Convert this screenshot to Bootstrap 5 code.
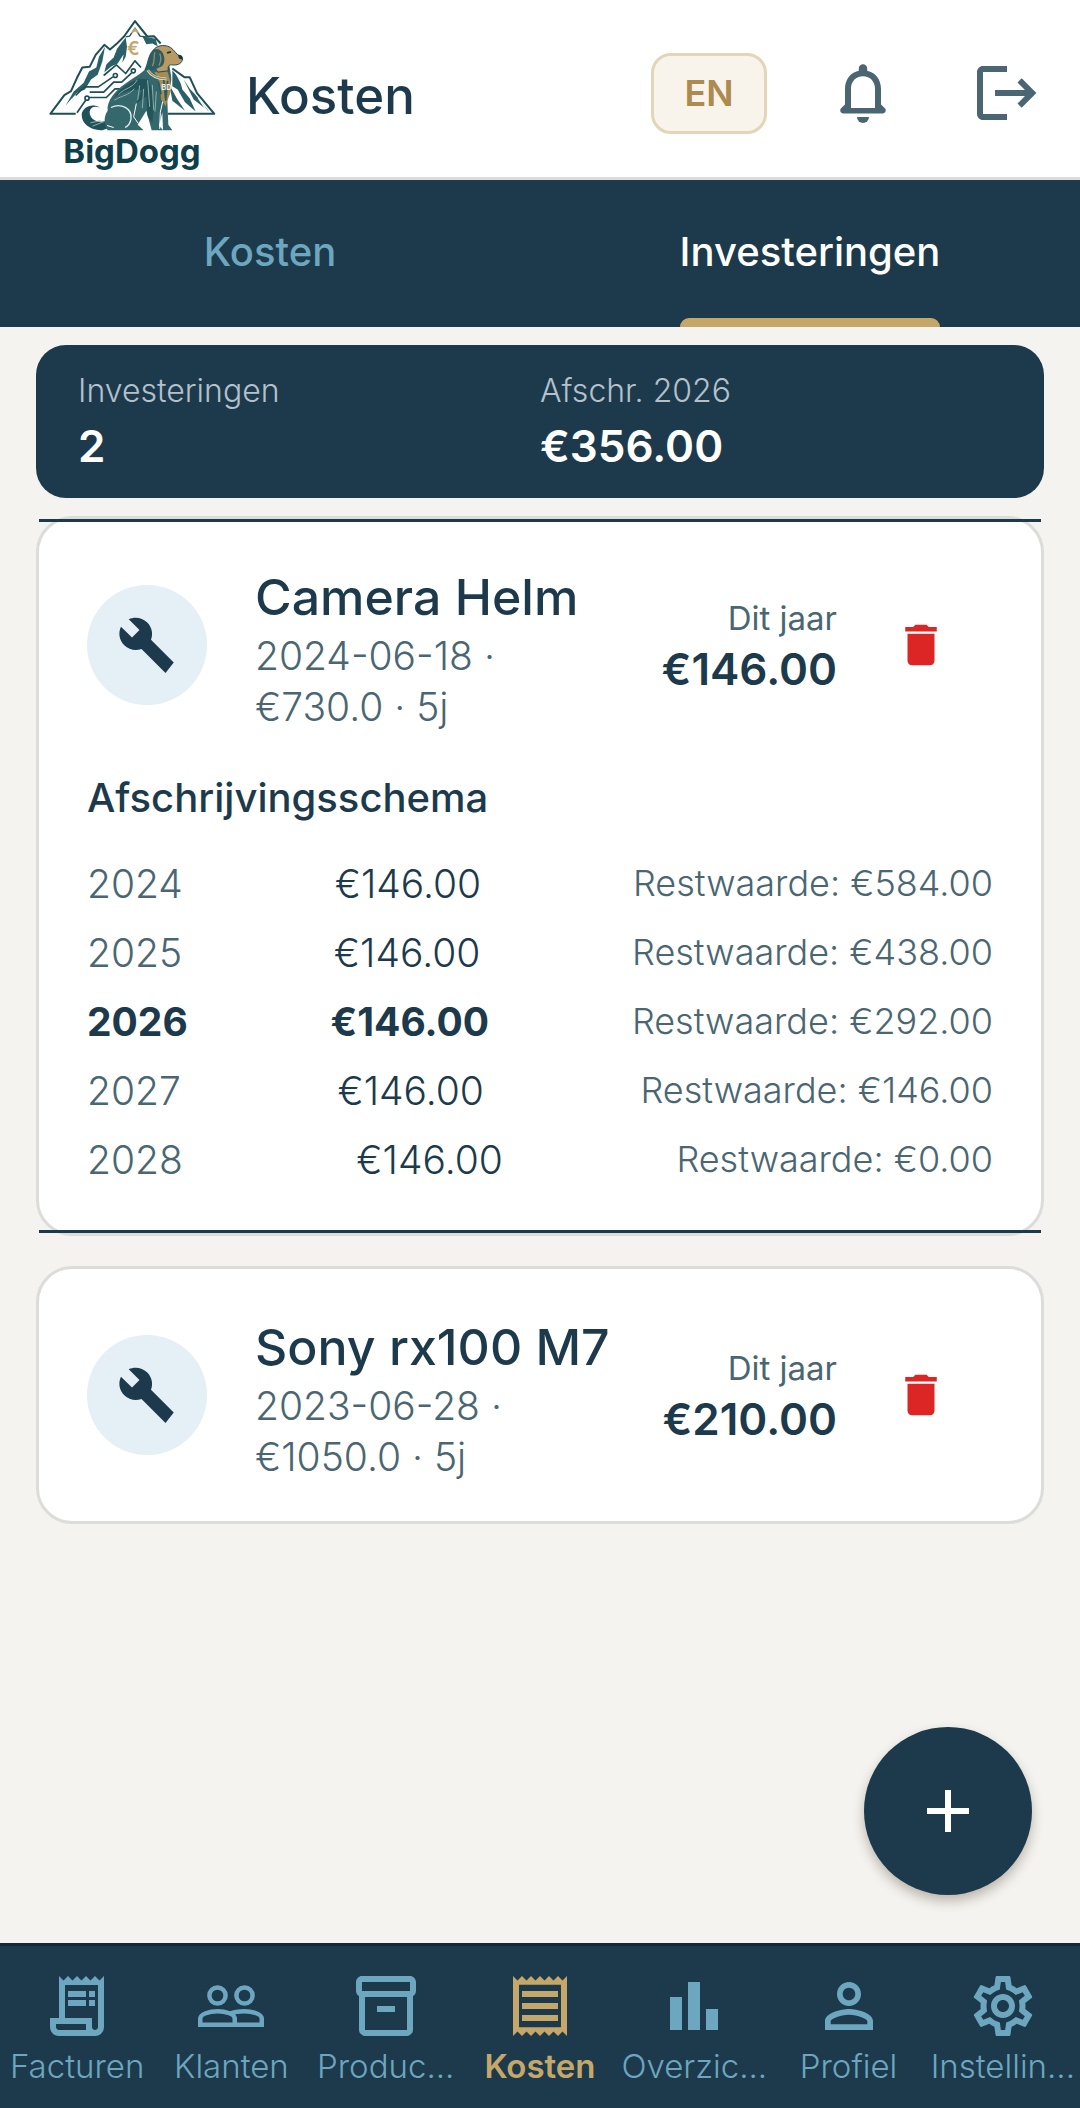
<!DOCTYPE html>
<html lang="nl">
<head>
  <meta charset="UTF-8">
  <meta name="viewport" content="width=device-width, initial-scale=1.0">
  <title>BigDogg - Kosten</title>
  <link href="https://cdn.jsdelivr.net/npm/bootstrap@5.3.0/dist/css/bootstrap.min.css" rel="stylesheet">
  <script src="https://cdn.jsdelivr.net/npm/bootstrap@5.3.0/dist/js/bootstrap.bundle.min.js"></script>
  <style>
    :root {
      --navy: #1c3a4b;
      --slate: #4a6672;
      --sky: #6ca6bf;
      --gold: #c6a76a;
      --line: #dcddda;
    }
    body {
      font-family: Inter, "Open Sans", sans-serif;
      background: #f4f3ef;
      color: var(--navy);
    }
    svg { display: block; flex-shrink: 0; }
    button { color: inherit; }

    /* header */
    .app-header { height: 180px; padding: 9px 6px 0 45px; border-bottom: 3px solid var(--line); }
    .brand { width: 174px; }
    .brand-name { font-size: 33px; line-height: 36px; font-weight: 700; color: #0f3f4a; }
    .page-title { font-size: 51px; line-height: 60px; font-weight: 500; padding-top: 6px; margin-left: 27px; }
    .lang-btn {
      width: 116px; height: 81px; margin-right: 25px;
      border: 3px solid #e3d6b8; border-radius: 20px;
      background: #f8f4eb; color: #ad8a4e;
      font-size: 36px; font-weight: 600;
    }
    .icon-btn { width: 141px; height: 144px; color: var(--slate); }

    /* tabs */
    .app-tabs { background: var(--navy); height: 147px; }
    .app-tabs a { font-size: 40px; line-height: 60px; font-weight: 500; color: var(--sky); }
    .app-tabs a span { padding-top: 42px; }
    .app-tabs a.active { color: #fff; }
    .tab-bar { height: 9px; border-radius: 9px 9px 0 0; }
    .active .tab-bar { background: var(--gold); }

    /* content */
    .app-main { padding: 18px 36px 36px; }
    .summary { background: var(--navy); border-radius: 30px; padding: 21px 42px; color: #fff; margin-bottom: 18px; }
    .summary dt { font-size: 32px; line-height: 50px; font-weight: 300; color: #b4c1cc; }
    .summary dd { font-size: 44px; line-height: 61px; font-weight: 600; }
    .asset { background: #fff; border: 3px solid var(--line); border-radius: 36px; margin-bottom: 30px; }
    .asset hr { height: 3px; border: 0; background: var(--navy); opacity: 1; }
    .asset-body { padding: 39px 48px; }
    .asset.open .asset-body { padding: 36px 48px; }
    .asset-icon { width: 120px; height: 120px; background: #e5eff6; margin-right: 48px; }
    .asset-text { padding-top: 6px; }
    .asset-text h2 { font-size: 50px; line-height: 66px; font-weight: 500; }
    .asset-text p { width: 270px; font-size: 39px; line-height: 51px; font-weight: 300; color: var(--slate); }
    .year-label { font-size: 33px; line-height: 48px; color: var(--slate); }
    .year-amount { font-size: 44px; line-height: 54px; font-weight: 600; }
    .trash-btn { width: 144px; height: 144px; margin-left: 12px; color: #dc2626; }
    .schema-title { font-size: 40px; line-height: 60px; font-weight: 500; margin: 36px 0 21px; }
    .schema td { font-size: 39px; line-height: 69px; font-weight: 300; }
    .schema td:first-child { color: var(--slate); }
    .schema td:last-child { font-size: 36px; color: var(--slate); }
    .schema .current td:not(:last-child) { font-weight: 700; color: var(--navy); }
    .fab {
      right: 48px; bottom: 48px; width: 168px; height: 168px;
      background: var(--navy); color: #fff; box-shadow: 0 6px 12px rgba(60, 40, 20, .3);
    }

    /* bottom navigation */
    .app-nav { background: var(--navy); border-top: 3px solid #12293a; height: 165px; padding-top: 24px; }
    .app-nav a { flex: 1 1 0; min-width: 0; font-size: 33px; line-height: 48px; font-weight: 300; color: var(--sky); }
    .app-nav a.active { font-weight: 600; color: var(--gold); }
  </style>
</head>
<body class="d-flex flex-column min-vh-100">

  <header class="app-header bg-white d-flex align-items-center">
    <div class="brand d-flex flex-column align-items-center">
      <svg width="168" height="116" viewBox="55 48 504 345" fill="none" stroke-linejoin="round" aria-hidden="true">
        <!-- mountain outline -->
        <g stroke="#1d4f56" stroke-width="6">
          <path d="M138 337H62l42-56 20-12 18-40 16-31 22-2 18-36 26-30 17 14 20-17 22-22 33-46 37 46 20-1 20 22"/>
          <path d="M414 337h140l-52-62-22-48h-16l-36-26"/>
          <path d="M288 106l12-2 16-24 15 24 18 2" stroke-width="4"/>
        </g>
        <!-- rock faces -->
        <g fill="#2b6068">
          <path d="M288 108l-26 34-10 26-22 20-6 24 22-18 18-8 18-28-4 26 10-18 4-30z"/>
          <path d="M226 136l-18 30-8 32-22 12-16 34-30 26-24 42 34-38 24-10 18-30 20-14 14-40z"/>
          <path d="M338 104l12 24 18-2 16 8-6-22zM428 206l22 26 8 32 22 26 18 40-32-28-22-38-16-10z"/>
          <path d="M462 234l20 30 12 12 44 54-46-36zM420 252l22 40 24 36-38-30z"/>
        </g>
        <path d="M104 296l-28 34M128 292l-22 28M244 168l-24 30M440 216l26 50M506 290l26 38" stroke="#fff" stroke-width="4"/>
        <!-- circuit traces -->
        <g stroke="#1d4f56" stroke-width="5">
          <path d="M142 334l26-38M178 288h52l26-26h32l40-38"/>
          <path d="M138 282l26-26h42l44-30M180 272h42l30-30h24l30-28"/>
          <path d="M222 222l38-32 28 26 28-38 18 20"/>
          <circle cx="172" cy="290" r="6" fill="#fff"/>
          <circle cx="257" cy="222" r="6" fill="#fff"/>
          <circle cx="311" cy="208" r="6" fill="#fff"/>
        </g>
        <path d="M300 98l16-20 16 20-16-8z" fill="#c6a76a"/>
        <text x="292" y="160" font-size="56" font-weight="600" fill="#c6a76a">€</text>
        <!-- dog: tail, body, legs -->
        <path d="M240 352c-26 20-62 4-60-22 2-12 14-18 30-12-22-14-52-2-54 22 0 28 28 48 62 46l30-10z" fill="#1f5158"/>
        <path d="M372 150c-12 24-16 44-28 56-16 14-32 22-48 34-38 24-66 58-62 88-14 20-10 44 0 58h108l-18-16 26-42 16 58h34l-12-14 10-40 2 54h28l-12-16-4-96c12-22 16-36 10-64l-8-50z" fill="#34686d"/>
        <path d="M330 232c-30 10-60 30-76 56 30-20 60-26 84-22l-18 40 30-22 4 60 14 20 6-70-18-60z" fill="#22545b"/>
        <path d="M244 318c30-14 64 2 60 34-2 14-10 22-18 26" stroke="#e4eeee" stroke-width="4"/>
        <path d="M266 280c20-22 44-20 56-44M254 296c26-16 40-12 60-34M330 252l-6 44M342 262l-4 58M354 236l6 80M368 250l4 76M380 270l-4 60M188 374l36-14M182 364l30-6" stroke="#8fb0ab" stroke-width="3"/>
        <path d="M320 306l-8 40 14 20M400 296l-8 36-2 50M232 372l20 6" stroke="#fff" stroke-width="3"/>
        <path d="M374 212c14 20 18 34 20 82l14 20c8-30 20-42 16-66l-12-44z" fill="#a88a55"/>
        <path d="M386 240l8 38M402 232l6 60M414 238l-6 60" stroke="#285c62" stroke-width="5"/>
        <!-- dog: head and collar -->
        <path d="M366 154c8-18 26-26 48-20 14 4 20 16 30 26 10 2 16 6 14 16-4 12-16 16-32 14-10 0-12 6-10 18l-32 4-18-30z" fill="#b99a63" stroke="#1d4f56" stroke-width="3"/>
        <path d="M366 150c-12 12-14 44-22 54 18 8 36-2 52-10 14-10 8-36 0-44-10-10-22-10-30 0z" fill="#2c5d63"/>
        <path d="M376 152c-6 14 2 26-8 42M390 156c6 12 4 24-2 36" stroke="#9a8a60" stroke-width="4"/>
        <path d="M412 154l12-3" stroke="#17363e" stroke-width="5"/>
        <path d="M445 161c12-3 17 6 11 13l-8-3z" fill="#17363e"/>
        <path d="M354 206c14 22 34 26 56 26" stroke="#dce8e6" stroke-width="8"/>
        <path d="M354 206c14 22 34 26 56 26" stroke="#a88a55" stroke-width="4"/>
        <text x="395" y="266" font-size="22" font-weight="700" fill="#e8efec">BD</text>
      </svg>
      <span class="brand-name">BigDogg</span>
    </div>
    <h1 class="page-title mb-0">Kosten</h1>
    <button type="button" class="lang-btn ms-auto p-0">EN</button>
    <button type="button" class="icon-btn btn p-0 border-0 d-flex align-items-center justify-content-center" aria-label="Meldingen">
      <svg width="72" height="72" viewBox="0 0 24 24" fill="currentColor">
        <path fill-rule="evenodd" d="M10.6 4.6V3.8a1.4 1.4 0 0 1 2.8 0v.8C16.2 5.200 18 7.600 18 10.600v5.200l1.300 1.300c.6.6.2 1.700-.7 1.700H5.400c-.9 0-1.300-1.100-.7-1.700L6 15.800v-5.200c0-3 1.800-5.400 4.600-6zM8 17h8v-6.500c0-2.300-1.600-4.100-4-4.100s-4 1.800-4 4.100z"/>
        <path d="M10 20h4a2 2 0 0 1-4 0z"/>
      </svg>
    </button>
    <button type="button" class="icon-btn btn p-0 border-0 d-flex align-items-center justify-content-center" aria-label="Uitloggen">
      <svg width="72" height="72" viewBox="0 0 24 24" fill="currentColor">
        <path d="M5 5h8V3H5c-1.100 0-2 .9-2 2v14c0 1.100.9 2 2 2h8v-2H5z"/>
        <path d="M22.800 12l-4.900-4.900-1.400 1.400L19 11H9v2h10l-2.500 2.500 1.400 1.400z"/>
      </svg>
    </button>
  </header>

  <nav class="app-tabs d-flex" aria-label="Weergave">
    <a href="#kosten" class="w-50 d-flex justify-content-center text-decoration-none">
      <div class="d-flex flex-column justify-content-between"><span>Kosten</span><div class="tab-bar"></div></div>
    </a>
    <a href="#investeringen" class="active w-50 d-flex justify-content-center text-decoration-none" aria-current="page">
      <div class="d-flex flex-column justify-content-between"><span>Investeringen</span><div class="tab-bar"></div></div>
    </a>
  </nav>

  <main class="app-main flex-grow-1 position-relative">
    <dl class="summary row gx-0">
      <div class="col-6">
        <dt>Investeringen</dt>
        <dd class="mb-0">2</dd>
      </div>
      <div class="col-6">
        <dt>Afschr. 2026</dt>
        <dd class="mb-0">€356.00</dd>
      </div>
    </dl>

    <section class="asset open">
      <hr class="m-0">
      <div class="asset-body">
        <div class="d-flex align-items-center">
          <div class="asset-icon rounded-circle d-flex align-items-center justify-content-center flex-shrink-0">
            <svg width="60" height="60" viewBox="0 0 24 24" fill="currentColor"><path d="M22.700 19l-9.100-9.100c.9-2.300.4-5-1.500-6.900-2-2-5-2.400-7.400-1.300L9 6 6 9 1.600 4.700C.4 7.100.9 10.100 2.900 12.100c1.900 1.900 4.600 2.400 6.900 1.500l9.600 9.600z"/></svg>
          </div>
          <div class="asset-text">
            <h2 class="mb-0 text-nowrap">Camera Helm</h2>
            <p class="mb-0">2024-06-18 · €730.0 · 5j</p>
          </div>
          <div class="ms-auto text-end">
            <div class="year-label">Dit jaar</div>
            <div class="year-amount">€146.00</div>
          </div>
          <button type="button" class="trash-btn btn p-0 border-0 d-flex align-items-center justify-content-center" aria-label="Verwijder Camera Helm">
            <svg width="54" height="54" viewBox="0 0 24 24" fill="currentColor"><path d="M6 19c0 1.100.9 2 2 2h8c1.100 0 2-.9 2-2V7H6v12zM19 4h-3.500l-1-1h-5l-1 1H5v2h14V4z"/></svg>
          </button>
        </div>
        <h3 class="schema-title">Afschrijvingsschema</h3>
        <table class="schema w-100">
          <tbody class="d-block">
            <tr class="d-flex justify-content-between"><td class="p-0">2024</td><td class="p-0">€146.00</td><td class="p-0">Restwaarde: €584.00</td></tr>
            <tr class="d-flex justify-content-between"><td class="p-0">2025</td><td class="p-0">€146.00</td><td class="p-0">Restwaarde: €438.00</td></tr>
            <tr class="current d-flex justify-content-between"><td class="p-0">2026</td><td class="p-0">€146.00</td><td class="p-0">Restwaarde: €292.00</td></tr>
            <tr class="d-flex justify-content-between"><td class="p-0">2027</td><td class="p-0">€146.00</td><td class="p-0">Restwaarde: €146.00</td></tr>
            <tr class="d-flex justify-content-between"><td class="p-0">2028</td><td class="p-0">€146.00</td><td class="p-0">Restwaarde: €0.00</td></tr>
          </tbody>
        </table>
      </div>
      <hr class="m-0">
    </section>

    <section class="asset">
      <div class="asset-body d-flex align-items-center">
        <div class="asset-icon rounded-circle d-flex align-items-center justify-content-center flex-shrink-0">
          <svg width="60" height="60" viewBox="0 0 24 24" fill="currentColor"><path d="M22.700 19l-9.100-9.100c.9-2.300.4-5-1.500-6.900-2-2-5-2.400-7.400-1.300L9 6 6 9 1.600 4.700C.4 7.100.9 10.100 2.900 12.100c1.900 1.900 4.600 2.400 6.900 1.500l9.600 9.600z"/></svg>
        </div>
        <div class="asset-text">
          <h2 class="mb-0 text-nowrap">Sony rx100 M7</h2>
          <p class="mb-0">2023-06-28 · €1050.0 · 5j</p>
        </div>
        <div class="ms-auto text-end">
          <div class="year-label">Dit jaar</div>
          <div class="year-amount">€210.00</div>
        </div>
        <button type="button" class="trash-btn btn p-0 border-0 d-flex align-items-center justify-content-center" aria-label="Verwijder Sony rx100 M7">
          <svg width="54" height="54" viewBox="0 0 24 24" fill="currentColor"><path d="M6 19c0 1.100.9 2 2 2h8c1.100 0 2-.9 2-2V7H6v12zM19 4h-3.500l-1-1h-5l-1 1H5v2h14V4z"/></svg>
        </button>
      </div>
    </section>

    <button type="button" class="fab btn rounded-circle border-0 p-0 position-absolute d-flex align-items-center justify-content-center" aria-label="Toevoegen">
      <svg width="72" height="72" viewBox="0 0 24 24" fill="currentColor"><path d="M19 13h-6v6h-2v-6H5v-2h6V5h2v6h6z"/></svg>
    </button>
  </main>

  <nav class="app-nav d-flex" aria-label="Hoofdmenu">
    <a href="#facturen" class="d-flex flex-column align-items-center text-decoration-none">
      <svg width="72" height="72" viewBox="0 0 24 24" fill="currentColor"><path d="M19.500 3.500L18 2l-1.500 1.500L15 2l-1.500 1.500L12 2l-1.500 1.500L9 2 7.500 3.500 6 2v14H3v3c0 1.660 1.340 3 3 3h12c1.660 0 3-1.340 3-3V2zM15 20H6c-.55 0-1-.45-1-1v-1h10v2zm4-1c0 .55-.45 1-1 1s-1-.45-1-1v-3H8V5h11v14z"/><path d="M9 7h6v2H9zM16 7h2v2h-2zM9 10h6v2H9zM16 10h2v2h-2z"/></svg>
      <span>Facturen</span>
    </a>
    <a href="#klanten" class="d-flex flex-column align-items-center text-decoration-none">
      <svg width="72" height="72" viewBox="0 0 24 24" fill="none" stroke="currentColor" stroke-width="1.500"><circle cx="7.500" cy="8.500" r="2.700"/><circle cx="16.500" cy="8.500" r="2.700"/><path d="M1.750 18.250V16.200c0-1.500 3-2.450 5.750-2.450s5.750.95 5.750 2.450v2.050zM11.600 14.600c1.400-.6 3.200-.85 4.900-.85 2.750 0 5.750.95 5.750 2.450v2.050h-9"/></svg>
      <span>Klanten</span>
    </a>
    <a href="#producten" class="d-flex flex-column align-items-center text-decoration-none">
      <svg width="72" height="72" viewBox="0 0 24 24" fill="currentColor"><path d="M20 2H4c-1 0-2 .9-2 2v3.010c0 .72.43 1.340 1 1.690V20c0 1.100 1.100 2 2 2h14c.9 0 2-.9 2-2V8.700c.57-.35 1-.97 1-1.690V4c0-1.100-1-2-2-2zm-1 18H5V9h14v11zm1-13H4V4h16v3z"/><path d="M9 12h6v2H9z"/></svg>
      <span>Produc...</span>
    </a>
    <a href="#kosten" class="active d-flex flex-column align-items-center text-decoration-none" aria-current="page">
      <svg width="72" height="72" viewBox="0 0 24 24" fill="currentColor"><path d="M19.500 3.500L18 2l-1.500 1.500L15 2l-1.500 1.500L12 2l-1.500 1.500L9 2 7.500 3.500 6 2 4.500 3.500 3 2v20l1.500-1.500L6 22l1.500-1.500L9 22l1.500-1.500L12 22l1.500-1.500L15 22l1.500-1.500L18 22l1.500-1.500L21 22V2zM19 19.090H5V4.910h14v14.180zM6 15h12v2H6zm0-4h12v2H6zm0-4h12v2H6z"/></svg>
      <span>Kosten</span>
    </a>
    <a href="#overzicht" class="d-flex flex-column align-items-center text-decoration-none">
      <svg width="72" height="72" viewBox="0 0 24 24" fill="currentColor"><path d="M4 9h4v11H4zM10 4h4v16h-4zM16 13h4v7h-4z"/></svg>
      <span>Overzic...</span>
    </a>
    <a href="#profiel" class="d-flex flex-column align-items-center text-decoration-none">
      <svg width="72" height="72" viewBox="0 0 24 24" fill="currentColor"><path d="M12 5.900c1.160 0 2.100.94 2.100 2.100s-.94 2.100-2.100 2.100S9.900 9.160 9.900 8s.94-2.100 2.100-2.100m0 9c2.970 0 6.100 1.460 6.100 2.100v1.100H5.900V17c0-.64 3.130-2.100 6.100-2.100M12 4C9.790 4 8 5.790 8 8s1.790 4 4 4 4-1.790 4-4-1.790-4-4-4zm0 9c-2.670 0-8 1.340-8 4v3h16v-3c0-2.660-5.330-4-8-4z"/></svg>
      <span>Profiel</span>
    </a>
    <a href="#instellingen" class="d-flex flex-column align-items-center text-decoration-none">
      <svg width="72" height="72" viewBox="0 0 24 24" fill="currentColor"><path d="M19.430 12.980c.04-.32.07-.64.07-.98 0-.34-.03-.66-.07-.98l2.110-1.650c.19-.15.24-.42.12-.64l-2-3.460c-.09-.16-.26-.25-.44-.25-.06 0-.12.01-.17.03l-2.490 1c-.52-.4-1.080-.73-1.690-.98l-.38-2.650C14.460 2.180 14.250 2 14 2h-4c-.25 0-.46.18-.49.42l-.38 2.650c-.61.25-1.170.59-1.690.98l-2.490-1c-.06-.02-.12-.03-.18-.03-.17 0-.34.09-.43.25l-2 3.460c-.13.22-.07.49.12.64l2.110 1.650c-.04.32-.07.65-.07.98 0 .33.03.66.07.98l-2.110 1.650c-.19.15-.24.42-.12.64l2 3.460c.09.16.26.25.44.25.06 0 .12-.01.17-.03l2.490-1c.52.4 1.080.73 1.690.98l.38 2.650c.03.24.24.42.49.42h4c.25 0 .46-.18.49-.42l.38-2.650c.61-.25 1.170-.59 1.690-.98l2.490 1c.06.02.12.03.18.03.17 0 .34-.09.43-.25l2-3.460c.12-.22.07-.49-.12-.64l-2.110-1.650zm-1.980-1.710c.04.31.05.52.05.73 0 .21-.02.43-.05.73l-.14 1.130.89.7 1.080.84-.7 1.210-1.270-.51-1.040-.42-.9.68c-.43.32-.84.56-1.250.73l-1.060.43-.16 1.130-.2 1.350h-1.400l-.19-1.350-.16-1.130-1.060-.43c-.43-.18-.83-.41-1.230-.71l-.91-.7-1.060.43-1.270.51-.7-1.210 1.080-.84.89-.7-.14-1.130c-.03-.31-.05-.54-.05-.74s.02-.43.05-.73l.14-1.130-.89-.7-1.080-.84.7-1.210 1.270.51 1.040.42.9-.68c.43-.32.84-.56 1.250-.73l1.060-.43.16-1.130.2-1.350h1.390l.19 1.350.16 1.130 1.060.43c.43.18.83.41 1.230.71l.91.7 1.060-.43 1.270-.51.7 1.210-1.070.85-.89.7.14 1.130zM12 8c-2.210 0-4 1.790-4 4s1.790 4 4 4 4-1.790 4-4-1.790-4-4-4zm0 6c-1.100 0-2-.9-2-2s.9-2 2-2 2 .9 2 2-.9 2-2 2z"/></svg>
      <span>Instellin...</span>
    </a>
  </nav>

</body>
</html>
